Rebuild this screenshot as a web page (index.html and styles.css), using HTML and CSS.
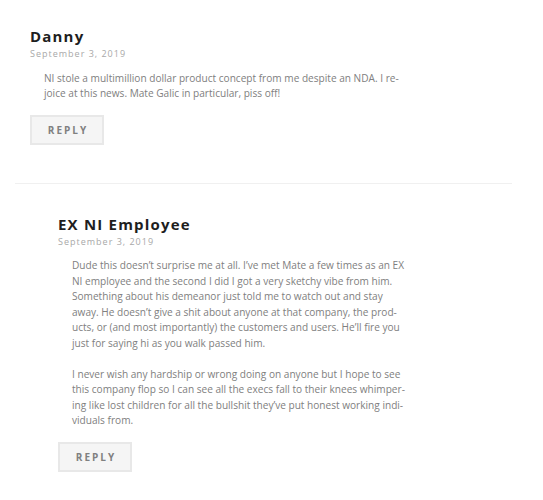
FILE: index.html
```html
<!DOCTYPE html>
<html lang="en">
<head>
<meta charset="utf-8">
<link rel="stylesheet" href="styles.css">
</head>
<body>
<div class="comments">
  <article class="comment">
    <h3 class="name">Danny</h3>
    <div class="date">September 3, 2019</div>
    <div class="text">
      <p>NI stole a multimillion dollar product concept from me despite an NDA. I re&shy;joice at this news. Mate Galic in particular, piss off!</p>
    </div>
    <button class="reply">REPLY</button>
  </article>
  <hr class="sep">
  <article class="comment child">
    <h3 class="name">EX NI Employee</h3>
    <div class="date">September 3, 2019</div>
    <div class="text">
      <p>Dude this doesn’t surprise me at all. I’ve met Mate a few times as an EX NI employee and the second I did I got a very sketchy vibe from him. Something about his demeanor just told me to watch out and stay away. He doesn’t give a shit about anyone at that company, the prod&shy;ucts, or (and most importantly) the customers and users. He’ll fire you just for saying hi as you walk passed him.</p>
      <p>I never wish any hardship or wrong doing on anyone but I hope to see this company flop so I can see all the execs fall to their knees whimper&shy;ing like lost children for all the bullshit they’ve put honest working indi&shy;viduals from.</p>
    </div>
    <button class="reply">REPLY</button>
  </article>
</div>
</body>
</html>
```
FILE: styles.css
```css
html, body {
  margin: 0;
  padding: 0;
  background: #fff;
}
body {
  font-family: "Open Sans", "Liberation Sans", sans-serif;
}
.comments {
  padding: 0 31px 0 15px;
}
.comment {
  padding-left: 15px;
  padding-top: 26px;
}
.comment.child {
  padding-left: 43px;
  padding-top: 30px;
}
.name {
  margin: 0;
  font-size: 15px;
  line-height: 20px;
  font-weight: 700;
  letter-spacing: 1.2px;
  color: #1e1e1e;
}
.date {
  margin-top: 2px;
  font-size: 9px;
  line-height: 12px;
  letter-spacing: 1px;
  color: #a8a8a8;
}
.text {
  margin-top: 10.5px;
  margin-right: 103px;
  padding-left: 14px;
  font-size: 10.1px;
  line-height: 15.5px;
  color: #808080;
}
.text p {
  margin: 0 0 15.5px;
}
.text p:last-child {
  margin-bottom: 0;
}
.reply {
  display: block;
  margin-top: 13px;
  width: 74px;
  height: 30px;
  padding: 0 0 0 2px;
  border: 2px solid #e8e8e8;
  background: #f5f5f5;
  font-family: "Open Sans", "Liberation Sans", sans-serif;
  font-size: 10px;
  font-weight: 700;
  letter-spacing: 2px;
  color: #808080;
  text-align: center;
}
.sep {
  margin: 38px 0 0;
  border: 0;
  border-top: 1px solid #f0f0f0;
  height: 0;
}
```
